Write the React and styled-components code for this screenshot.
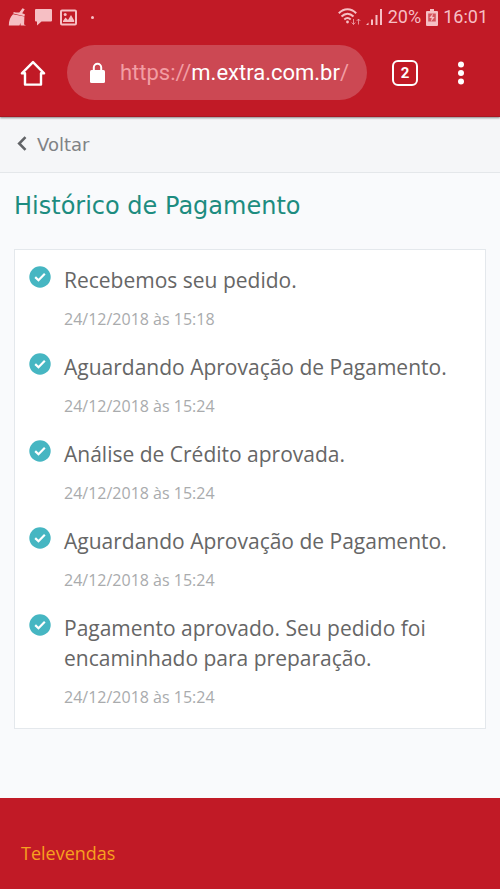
import React from "react";
import styled, { createGlobalStyle } from "styled-components";

const RED = "#c11a26";
const SOFT = "#f6bfc4";

const GlobalStyle = createGlobalStyle`
  * { box-sizing: border-box; }
  html { background: #f9fafc; }
  body { margin: 0; font-family: "Open Sans", "Noto Sans", sans-serif; }
  button { border: 0; padding: 0; background: none; cursor: pointer; }
  ul { list-style: none; margin: 0; padding: 0; }
`;

const Page = styled.div`
  display: flex;
  flex-direction: column;
  min-height: 100vh;
  background: #f9fafc;
`;

const Browser = styled.header`
  position: relative;
  background: ${RED};
  color: #fff;
  font-family: Roboto, sans-serif;
  border-bottom: 1px solid #a81722;
  box-shadow: 0 1px 2px rgba(0, 0, 0, 0.45);
`;

const StatusBar = styled.div`
  display: flex;
  align-items: center;
  justify-content: space-between;
  height: 34px;
  padding: 0 12px 0 8px;
  color: ${SOFT};
`;

const StatusGroup = styled.div`
  display: flex;
  align-items: center;
  gap: ${(p) => p.$gap}px;
`;

const StatusText = styled.span`
  font-size: 18px;
  line-height: 24px;
`;

const Dot = styled.span`
  width: 3px;
  height: 3px;
  margin-left: 6px;
  border-radius: 50%;
  background: ${SOFT};
`;

const Toolbar = styled.div`
  display: flex;
  align-items: center;
  height: 82px;
  padding: 0 25px 5px 19px;
`;

const IconButton = styled.button`
  display: flex;
  align-items: center;
  justify-content: center;
  flex: none;
  width: 28px;
  height: 40px;
  color: #fff;
`;

const AddressBar = styled.div`
  display: flex;
  align-items: center;
  flex: 1;
  min-width: 0;
  gap: 12px;
  height: 55px;
  margin: 0 24px 0 20px;
  padding: 0 12px 0 20px;
  border-radius: 28px;
  background: #cc4853;
`;

const Url = styled.span`
  font-size: 22px;
  line-height: 28px;
  white-space: nowrap;
  color: #f29da3;
`;

const Host = styled.span`
  color: #fff;
`;

const Actions = styled.div`
  display: flex;
  gap: 28px;
`;

const TabCount = styled.span`
  display: flex;
  align-items: center;
  justify-content: center;
  flex: none;
  width: 26px;
  height: 26px;
  border: 2px solid #fff;
  border-radius: 6px;
  font: 700 15px/20px Roboto, sans-serif;
`;

const BackBar = styled.nav`
  display: flex;
  align-items: center;
  height: 56px;
  padding: 0 15px;
  background: #f5f6f8;
  border-bottom: 1px solid #e4e7ea;
`;

const BackLink = styled.a`
  display: flex;
  align-items: center;
  gap: 8px;
  color: #808285;
  font: 400 18px/24px "DejaVu Sans", sans-serif;
  text-decoration: none;
`;

const Main = styled.main`
  flex: 1;
  padding: 17px 14px 69px;
`;

const Title = styled.h1`
  margin: 0 0 27px;
  color: #1d8c80;
  font: 400 24px/32px "DejaVu Sans", sans-serif;
`;

const Card = styled.ul`
  && { padding: 15px 14px 18px; }
  background: #fff;
  border: 1px solid #e4e8ec;
`;

const Event = styled.li`
  display: flex;
  align-items: flex-start;
  gap: 13px;
  & + & { margin-top: 20px; }
`;

const EventText = styled.p`
  margin: 0 0 12px;
  color: #666;
  font-size: 21px;
  line-height: 30px;
`;

const EventDate = styled.time`
  display: block;
  color: #a9abad;
  font-size: 16px;
  line-height: 25px;
`;

const Footer = styled.footer`
  padding: 40px 21px 20px;
  background: ${RED};
`;

const FooterLink = styled.a`
  display: block;
  color: #f7a11f;
  font-size: 18px;
  line-height: 31px;
  text-decoration: none;
`;

const EventIcon = styled.svg`
  flex: none;
`;

const Broom = () => (
  <svg width="19" height="18" viewBox="0 0 19 18" fill="currentColor" aria-hidden="true">
    <path d="M14.5.3 16.7 1.2 14.2 5.2 16.8 6.2 16.6 8.2 5.2 5.6 5.7 4.1 8 4.6 11.3 4.6z" />
    <path d="M5 6.2 16.4 8.600 16.1 16.6 18 17.6H12.6L12.4 15 11.5 17.6H.8C.9 12.5 2.2 9 5 6.2z" />
  </svg>
);

const Bubble = () => (
  <svg width="17" height="18" viewBox="0 0 17 18" fill="currentColor" aria-hidden="true">
    <path d="M1 1H16Q17 1 17 2V12.500Q17 13.500 16 13.500H6.500L2 17.500V13.500H1Q0 13.500 0 12.500V2Q0 1 1 1z" />
  </svg>
);

const Picture = () => (
  <svg width="17" height="17" viewBox="0 0 17 17" aria-hidden="true">
    <rect x="1" y="1.500" width="15" height="14" rx="1" fill="none" stroke="currentColor" strokeWidth="2" />
    <circle cx="5.200" cy="5.400" r="1.500" fill="currentColor" />
    <path d="M3 12 5.500 8.500 8 11 11 6 14.200 11.500V13H3z" fill="currentColor" />
  </svg>
);

const Wifi = () => (
  <svg width="23" height="18" viewBox="0 0 23 18" fill="none" stroke="currentColor" strokeWidth="2" aria-hidden="true">
    <path d="M.8 5.200C6-.1 13-.1 18.200 5.200M3.500 8.500C7.200 4.900 11.800 4.900 15.500 8.500M6.300 11.500C8.300 9.700 10.700 9.700 12.700 11.500" />
    <circle cx="9.500" cy="14" r="1.400" fill="currentColor" stroke="none" />
    <path d="M15.500 11V16.300M13.700 14.500 15.500 16.500 17.300 14.500M20.500 16.500V11.200M18.700 13 20.500 11 22.300 13" strokeWidth="1" opacity=".7" />
  </svg>
);

const Signal = () => (
  <svg width="17" height="17" viewBox="0 0 17 17" fill="currentColor" aria-hidden="true">
    <path d="M0 16 2.500 13.500V16zM5 10.500H7V16H5zM9.500 6H11.500V16H9.500zM14 0H16V16H14z" />
  </svg>
);

const Battery = () => (
  <svg width="12" height="17" viewBox="0 0 12 17" aria-hidden="true">
    <path d="M4 0H8V2H11Q12 2 12 3V16Q12 17 11 17H1Q0 17 0 16V3Q0 2 1 2H4z" fill="currentColor" />
    <path d="M2.200 4.500H9.800V12.500H2.200z" fill={RED} opacity=".65" />
    <path d="M7 4.300 3.300 9H5.700L4.900 12.800 8.700 8H6.300z" fill="currentColor" />
  </svg>
);

const Home = () => (
  <svg width="26" height="26" viewBox="0 0 26 26" fill="none" stroke="currentColor" strokeWidth="2.400" strokeLinejoin="round" aria-hidden="true">
    <path d="M13 2.100 1.900 13.300H5V24.600H21V13.300H24.100z" />
  </svg>
);

const Lock = () => (
  <svg width="21" height="22" viewBox="0 0 21 22" aria-hidden="true">
    <rect x="3" y="8" width="15" height="13" rx="1.500" fill="#fff" />
    <path d="M6.800 9V5.500A3.700 3.700 0 0 1 14.200 5.500V9" fill="none" stroke="#fff" strokeWidth="2" />
  </svg>
);

const More = () => (
  <svg width="8" height="24" viewBox="0 0 8 24" fill="currentColor" aria-hidden="true">
    <circle cx="4" cy="3.500" r="3" />
    <circle cx="4" cy="12" r="3" />
    <circle cx="4" cy="20.500" r="3" />
  </svg>
);

const Chevron = () => (
  <svg width="14" height="18" viewBox="0 0 14 18" fill="none" stroke="#626467" strokeWidth="2.600" aria-hidden="true">
    <path d="M10.500 1.200 4.200 7.500 10.500 13.800" />
  </svg>
);

const Check = () => (
  <EventIcon width="22" height="24" viewBox="0 0 22 24" aria-hidden="true">
    <circle cx="11" cy="12" r="10.700" fill="#46b6c2" />
    <path d="M6.200 12.100 9.500 15.200 15.800 8.800" fill="none" stroke="#fff" strokeWidth="2.200" />
  </EventIcon>
);

const events = [
  { text: "Recebemos seu pedido.", date: "24/12/2018 às 15:18" },
  { text: "Aguardando Aprovação de Pagamento.", date: "24/12/2018 às 15:24" },
  { text: "Análise de Crédito aprovada.", date: "24/12/2018 às 15:24" },
  { text: "Aguardando Aprovação de Pagamento.", date: "24/12/2018 às 15:24" },
  { text: "Pagamento aprovado. Seu pedido foi encaminhado para preparação.", date: "24/12/2018 às 15:24" },
];

export default function App() {
  return (
    <Page>
      <GlobalStyle />
      <Browser>
        <StatusBar>
          <StatusGroup $gap={8}>
            <Broom />
            <Bubble />
            <Picture />
            <Dot />
          </StatusGroup>
          <StatusGroup $gap={5}>
            <Wifi />
            <Signal />
            <StatusText>20%</StatusText>
            <Battery />
            <StatusText>16:01</StatusText>
          </StatusGroup>
        </StatusBar>
        <Toolbar>
          <IconButton type="button" aria-label="Página inicial"><Home /></IconButton>
          <AddressBar>
            <Lock />
            <Url>https://<Host>m.extra.com.br</Host>/</Url>
          </AddressBar>
          <Actions>
            <IconButton type="button" aria-label="Abas abertas"><TabCount>2</TabCount></IconButton>
            <IconButton type="button" aria-label="Mais opções"><More /></IconButton>
          </Actions>
        </Toolbar>
      </Browser>
      <BackBar>
        <BackLink href="#voltar"><Chevron />Voltar</BackLink>
      </BackBar>
      <Main>
        <Title>Histórico de Pagamento</Title>
        <Card>
          {events.map((event, index) => (
            <Event key={index}>
              <Check />
              <div>
                <EventText>{event.text}</EventText>
                <EventDate>{event.date}</EventDate>
              </div>
            </Event>
          ))}
        </Card>
      </Main>
      <Footer>
        <FooterLink href="#televendas">Televendas</FooterLink>
      </Footer>
    </Page>
  );
}
